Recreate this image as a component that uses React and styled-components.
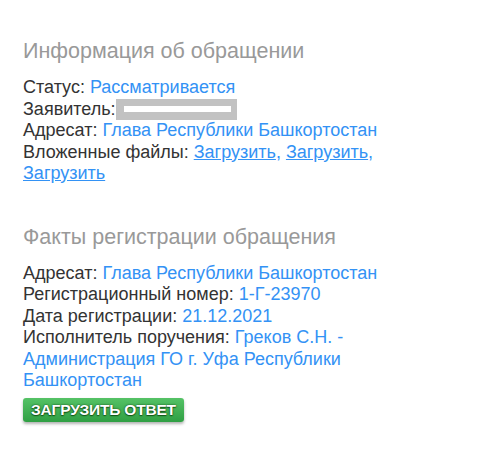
import React from 'react'
import styled, { createGlobalStyle } from 'styled-components'

const Global = createGlobalStyle`
  body {
    margin: 0;
    background: #fff;
    font-family: "Liberation Sans", Arial, sans-serif;
  }
`

const Page = styled.div`
  width: 410px;
  padding: 39px 23px 20px 23px;
  color: #333;
`

const Section = styled.section`
  margin-bottom: ${(p) => p.gap || 0}px;
`

const Title = styled.h2`
  margin: 0 0 14px 0;
  font-size: 21.5px;
  line-height: 24px;
  font-weight: normal;
  color: #999;
`

const Row = styled.div`
  font-size: 18px;
  line-height: 21.5px;
`

const Value = styled.span`
  color: #3392f5;
`

const FileLink = styled.a`
  color: #3392f5;
  text-decoration: underline;
  cursor: pointer;
`

const Hidden = styled.span`
  display: inline-flex;
  align-items: center;
  vertical-align: top;
  width: 121px;
  height: 21px;
  padding: 0 6px 0 8px;
  box-sizing: border-box;
  background: #c2c2c2;
`

const HiddenBar = styled.span`
  flex: 1;
  height: 6px;
  background: #fff;
`

const Button = styled.button`
  margin-top: 6px;
  display: block;
  width: 161px;
  height: 24px;
  padding: 1px 0 0 0;
  border: none;
  border-radius: 3px;
  background: linear-gradient(#55c266, #2f9f43);
  box-shadow: 0 2px 3px rgba(0, 0, 0, 0.3);
  color: #fff;
  font-family: "Liberation Sans", Arial, sans-serif;
  font-weight: bold;
  font-size: 15.5px;
  letter-spacing: -0.2px;
  text-shadow: 0 0 2px rgba(0, 50, 0, 0.9), 0 1px 1px rgba(0, 50, 0, 0.6);
  cursor: pointer;
`

const App = () => {
  return (
    <>
      <Global />
      <Page>
        <Section gap={40}>
          <Title>Информация об обращении</Title>
          <Row>Статус: <Value>Рассматривается</Value></Row>
          <Row>Заявитель:<Hidden><HiddenBar /></Hidden></Row>
          <Row>Адресат: <Value>Глава Республики Башкортостан</Value></Row>
          <Row>
            Вложенные файлы: <FileLink>Загрузить</FileLink><Value>, </Value>
            <FileLink>Загрузить</FileLink><Value>, </Value>
            <FileLink>Загрузить</FileLink>
          </Row>
        </Section>
        <Section>
          <Title>Факты регистрации обращения</Title>
          <Row>Адресат: <Value>Глава Республики Башкортостан</Value></Row>
          <Row>Регистрационный номер: <Value>1-Г-23970</Value></Row>
          <Row>Дата регистрации: <Value>21.12.2021</Value></Row>
          <Row>Исполнитель поручения: <Value>Греков С.Н. - Администрация ГО г. Уфа Республики Башкортостан</Value></Row>
          <Button>ЗАГРУЗИТЬ ОТВЕТ</Button>
        </Section>
      </Page>
    </>
  )
}

export default App
